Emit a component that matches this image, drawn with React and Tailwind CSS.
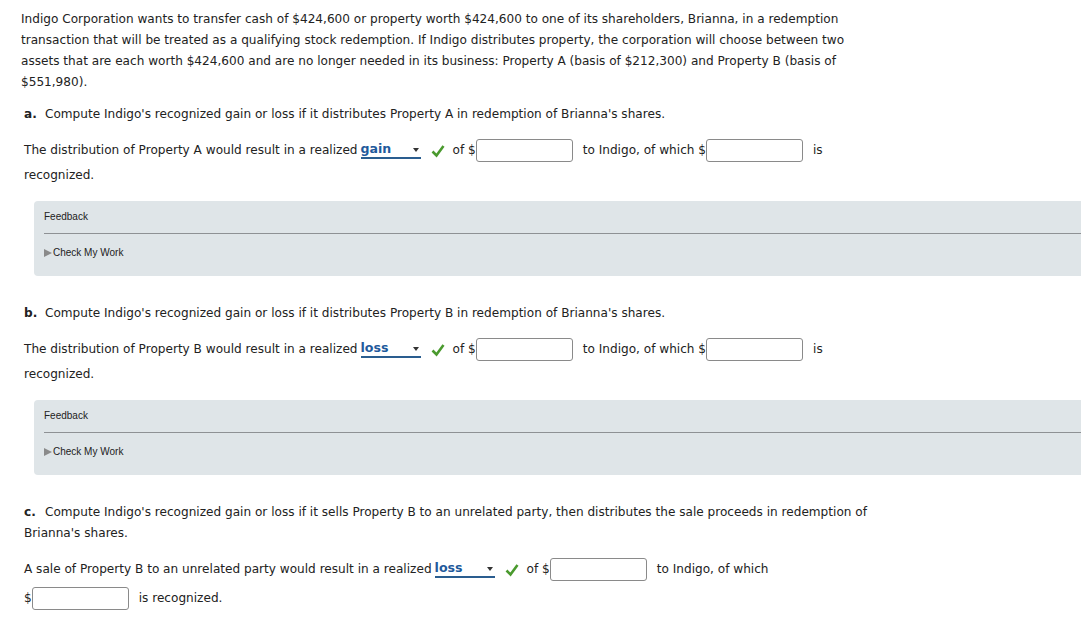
import React from 'react';

const Select = ({ value }) => (
  <span className="inline-flex items-center justify-between w-[60px] h-[17px] border-b-2 border-[#2a5d8f] mx-[3px] align-middle">
    <span className="font-bold text-[#1f5a9c] leading-none text-[12.6px]">{value}</span>
    <span className="w-0 h-0 border-l-[3.5px] border-r-[3.5px] border-t-[4px] border-l-transparent border-r-transparent border-t-[#333] mr-[2px]" />
  </span>
);

const Check = () => (
  <svg width="14" height="14" viewBox="0 0 14 14" className="inline-block ml-[7px] mr-[8px] align-middle">
    <path d="M1.5 7.5 L5.5 11.5 L12.5 2" stroke="#4a9a2e" strokeWidth="2.6" fill="none" />
  </svg>
);

const Input = () => (
  <span className="inline-block w-[97px] h-[23px] border border-[#8a8a8a] rounded-[3px] bg-white align-middle" />
);

const Feedback = () => (
  <div className="ml-[34px] bg-[#dfe5e8] rounded-l-[4px] h-[75px] pl-[10px] pt-[9px]" style={{ fontFamily: '"Liberation Sans", Arial, sans-serif' }}>
    <div className="text-[10px] text-[#222] leading-[13px]">Feedback</div>
    <div className="border-t border-[#8e9194] mt-[10px]" />
    <div className="flex items-center text-[10px] text-[#222] mt-[12px] leading-[13px]">
      <span className="w-0 h-0 border-t-[4px] border-b-[4px] border-l-[8px] border-t-transparent border-b-transparent border-l-[#8a8a8a] mr-[1px]" />
      Check My Work
    </div>
  </div>
);

const Heading = ({ letter, children, className = '' }) => (
  <p className={`pl-[24px] leading-[21px] ${className}`}>
    <b className="inline-block w-[21px]">{letter}</b>{children}
  </p>
);

export default function App() {
  return (
    <div className="w-[1081px] h-[626px] bg-white overflow-hidden text-[12.1px] text-[#222]" style={{ fontFamily: '"DejaVu Sans", Verdana, sans-serif' }}>
      <p className="pl-[21px] pr-[230px] pt-[9px] leading-[21px]">
        Indigo Corporation wants to transfer cash of $424,600 or property worth $424,600 to one of its shareholders, Brianna, in a redemption transaction that will be treated as a qualifying stock redemption. If Indigo distributes property, the corporation will choose between two assets that are each worth $424,600 and are no longer needed in its business: Property A (basis of $212,300) and Property B (basis of $551,980).
      </p>

      <Heading letter="a." className="mt-[11px]">Compute Indigo's recognized gain or loss if it distributes Property A in redemption of Brianna's shares.</Heading>
      <div className="pl-[24px] mt-[13px] leading-[25px]">
        <div className="flex items-center h-[25px]">
          The distribution of Property A would result in a realized <Select value="gain" /><Check /> of $<Input /><span className="ml-[10px]">to Indigo, of which $</span><Input /><span className="ml-[10px]">is</span>
        </div>
        <div>recognized.</div>
      </div>
      <div className="mt-[13px]"><Feedback /></div>

      <Heading letter="b." className="mt-[27px]">Compute Indigo's recognized gain or loss if it distributes Property B in redemption of Brianna's shares.</Heading>
      <div className="pl-[24px] mt-[13px] leading-[25px]">
        <div className="flex items-center h-[25px]">
          The distribution of Property B would result in a realized <Select value="loss" /><Check /> of $<Input /><span className="ml-[10px]">to Indigo, of which $</span><Input /><span className="ml-[10px]">is</span>
        </div>
        <div>recognized.</div>
      </div>
      <div className="mt-[13px]"><Feedback /></div>

      <Heading letter="c." className="mt-[27px] pr-[210px]">Compute Indigo's recognized gain or loss if it sells Property B to an unrelated party, then distributes the sale proceeds in redemption of Brianna's shares.</Heading>
      <div className="pl-[24px] mt-[13px]">
        <div className="flex items-center h-[25px]">
          A sale of Property B to an unrelated party would result in a realized <Select value="loss" /><Check /> of $<Input /><span className="ml-[10px]">to Indigo, of which</span>
        </div>
        <div className="flex items-center h-[25px] mt-[4px]">
          $<Input /><span className="ml-[10px]">is recognized.</span>
        </div>
      </div>
    </div>
  );
}
